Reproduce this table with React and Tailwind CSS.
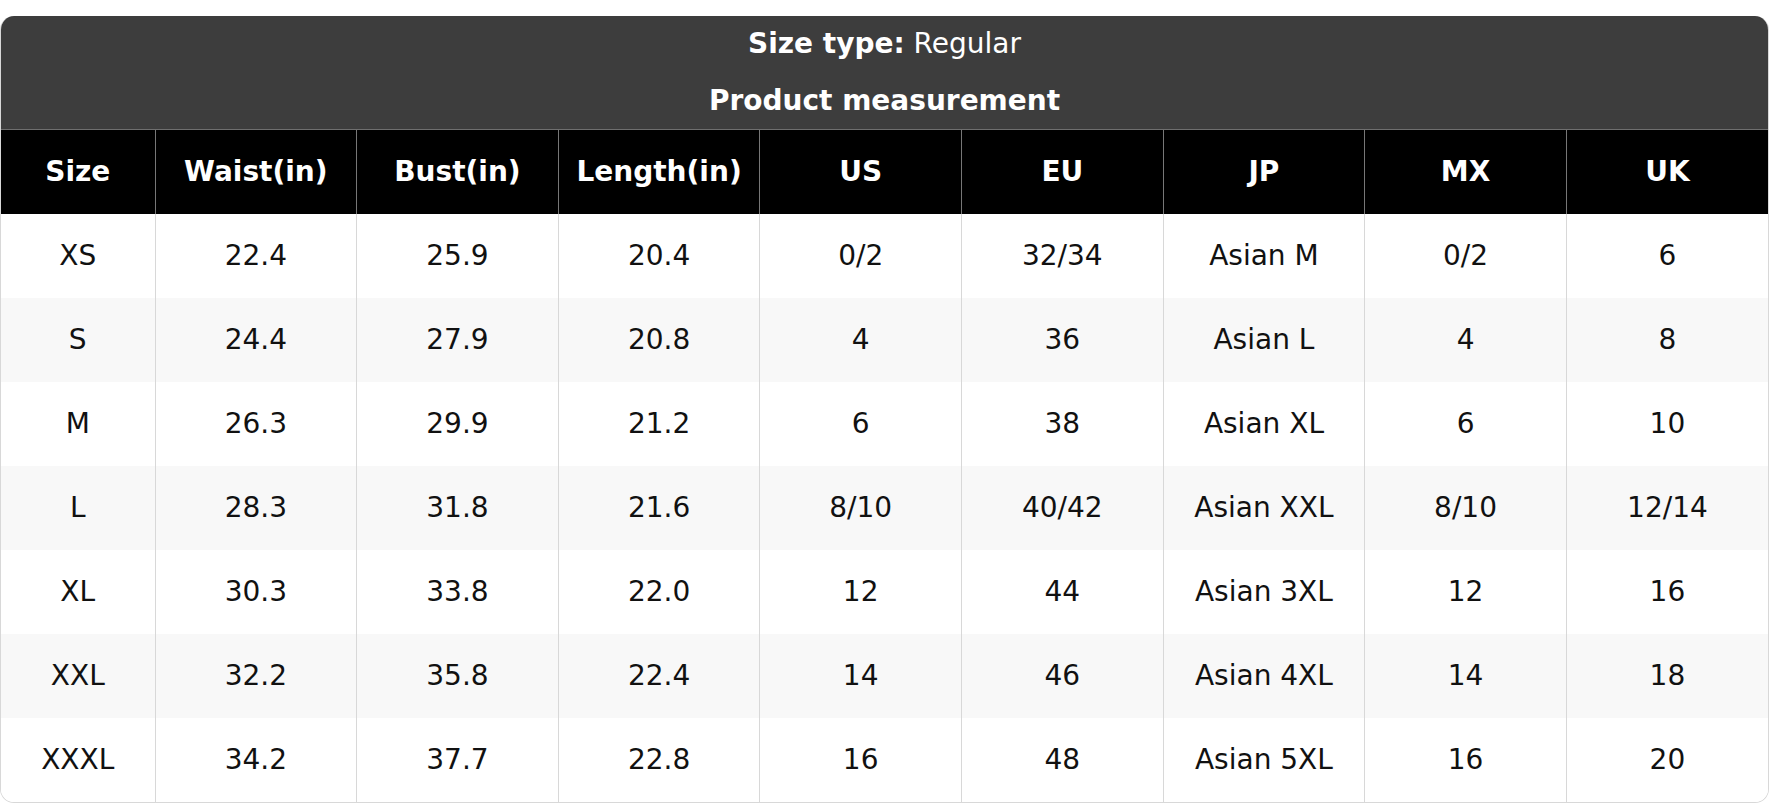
const columns = ["Size", "Waist(in)", "Bust(in)", "Length(in)", "US", "EU", "JP", "MX", "UK"];

const rows = [
  ["XS", "22.4", "25.9", "20.4", "0/2", "32/34", "Asian M", "0/2", "6"],
  ["S", "24.4", "27.9", "20.8", "4", "36", "Asian L", "4", "8"],
  ["M", "26.3", "29.9", "21.2", "6", "38", "Asian XL", "6", "10"],
  ["L", "28.3", "31.8", "21.6", "8/10", "40/42", "Asian XXL", "8/10", "12/14"],
  ["XL", "30.3", "33.8", "22.0", "12", "44", "Asian 3XL", "12", "16"],
  ["XXL", "32.2", "35.8", "22.4", "14", "46", "Asian 4XL", "14", "18"],
  ["XXXL", "34.2", "37.7", "22.8", "16", "48", "Asian 5XL", "16", "20"],
];

export default function App() {
  return (
    <div className="pt-[16px] bg-white font-['DejaVu_Sans',sans-serif] text-[28px]">
      <div className="w-[1769px] rounded-[14px] overflow-hidden border border-[#d8d8d8] border-t-0">
        <div className="bg-[#3d3d3d] text-white text-center pt-[12px] pb-[12px] flex flex-col gap-[25px] leading-[32px] border-b border-[#6f6f6f]">
          <p>
            <span className="font-bold">Size type:</span> Regular
          </p>
          <p className="font-bold">Product measurement</p>
        </div>
        <table className="w-full table-fixed border-collapse">
          <colgroup>
            <col className="w-[154px]" />
            {columns.slice(1).map((c) => (
              <col key={c} />
            ))}
          </colgroup>
          <thead>
            <tr className="bg-black text-white h-[84px]">
              {columns.map((c, i) => (
                <th
                  key={c}
                  className={`font-bold text-center ${i > 0 ? "border-l border-[#777]" : ""}`}
                >
                  {c}
                </th>
              ))}
            </tr>
          </thead>
          <tbody>
            {rows.map((r, ri) => (
              <tr key={r[0]} className={`h-[84px] text-[#111] ${ri % 2 === 1 ? "bg-[#f8f8f8]" : "bg-white"}`}>
                {r.map((v, i) => (
                  <td
                    key={i}
                    className={`text-center ${i > 0 ? "border-l border-[#d8d8d8]" : ""}`}
                  >
                    {v}
                  </td>
                ))}
              </tr>
            ))}
          </tbody>
        </table>
      </div>
    </div>
  );
}
